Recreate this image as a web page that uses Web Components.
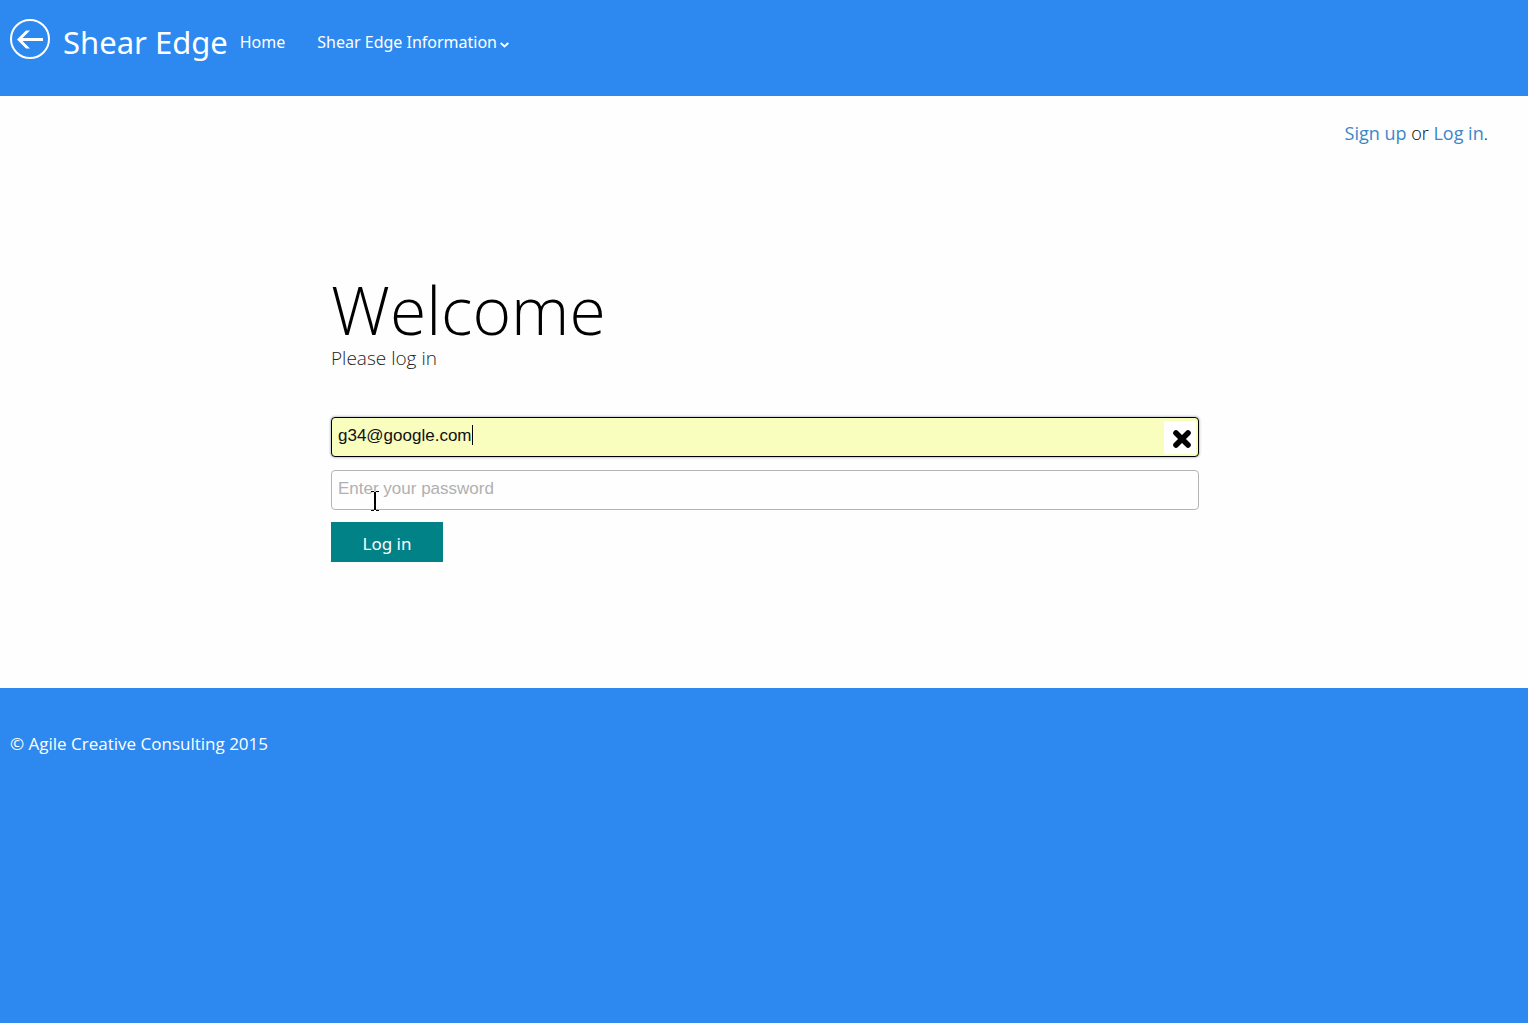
<!DOCTYPE html>
<html lang="en">
<head>
<meta charset="utf-8">
<title>Shear Edge - Log in</title>
<style>
html, body { margin: 0; min-height: 100%; }
body { font-family: "Open Sans", "Noto Sans", sans-serif; font-size: 17px; line-height: 24px; color: #000; background: #fefefe; }
</style>
</head>
<body>
<shear-app></shear-app>
<script>
const define = (name, html, setup) => customElements.define(name, class extends HTMLElement {
  connectedCallback() {
    if (this.shadowRoot) return;
    this.attachShadow({ mode: 'open' }).innerHTML = html;
    if (setup) setup(this.shadowRoot, this);
  }
});

define('shear-header', `
<style>
:host { display: block; background: #2d89f0; color: #fff; }
header { display: flex; height: 96px; box-sizing: border-box; padding: 19px 10px 0; align-items: flex-start; }
a { color: inherit; text-decoration: none; }
.back { display: block; width: 40px; height: 40px; margin-right: 13px; }
svg { display: block; }
.brand { font: 31px/46px "Noto Sans", sans-serif; margin-right: 12px; }
nav { display: flex; gap: 32px; font: 16px/46px "Noto Sans", sans-serif; }
.menu { display: flex; align-items: center; gap: 3px; }
.menu svg { margin-top: 6px; }
</style>
<header>
  <a class="back" href="#" aria-label="Back"><svg width="40" height="40" viewBox="0 0 40 40" fill="none" stroke="#fff"><circle cx="20" cy="20" r="19" stroke-width="2"/><path d="M33 20.5H9" stroke-width="3"/><path d="M7 20.5L16 11.5H20L11 20.5L20 29.5H16Z" fill="#fff" stroke="none"/></svg></a>
  <a class="brand" href="#">Shear Edge</a>
  <nav><a href="#">Home</a><a class="menu" href="#">Shear Edge Information<svg width="9" height="6" viewBox="0 0 9 6" fill="none" stroke="#fff" stroke-width="2"><path d="M.7 1L4.5 4.4L8.3 1"/></svg></a></nav>
</header>`);

define('account-links', `
<style>
:host { display: block; text-align: right; padding: 25px 40px 0; font-size: 18px; line-height: 24px; font-weight: 300; }
a { color: #3a87c8; text-decoration: none; font-weight: 400; }
</style>
<a href="#">Sign up</a> or <a href="#">Log in</a>.`);

define('text-field', `
<style>
:host { display: block; }
.box { display: flex; align-items: center; height: 40px; box-sizing: border-box; border: 1px solid #b4b4b4; border-radius: 4px; padding: 0 2px 0 6px; background: #fefefe; }
.box.active { border-color: #000; background: #f9fdbd; box-shadow: 0 0 2px 1px #c4c8d0; }
input { flex: 1; min-width: 0; border: 0; outline: 0; padding: 0 0 2px; margin: 0; background: none; font: 17px/24px "Liberation Sans", sans-serif; color: #111; }
input::placeholder { color: #b0b0b0; opacity: 1; }
.active input { flex: none; field-sizing: content; }
.caret { width: 1px; height: 20px; background: #000; margin-bottom: 4px; }
label { position: absolute; width: 1px; height: 1px; overflow: hidden; clip-path: inset(50%); }
</style>
<label for="f"></label><div class="box"><input id="f"></div>`,
(root, host) => {
  const input = root.querySelector('input');
  input.type = host.getAttribute('type');
  root.querySelector('label').setAttribute('aria-label', host.getAttribute('label'));
  input.setAttribute('aria-label', host.getAttribute('label'));
  if (host.hasAttribute('placeholder')) input.placeholder = host.getAttribute('placeholder');
  if (host.hasAttribute('value')) {
    input.value = host.getAttribute('value');
    root.querySelector('.box').classList.add('active');
    input.insertAdjacentHTML('afterend', `<span class="caret"></span><clear-button></clear-button>`);
  }
});

define('clear-button', `
<style>
:host { display: block; margin-left: auto; }
button { display: block; width: 32px; height: 33px; border: 0; padding: 3px 0 0 3px; background: #fff; }
svg { display: block; margin: auto; }
</style>
<button type="button" aria-label="Clear"><svg width="20" height="20" viewBox="0 0 20 20" stroke="#000" stroke-width="5.6" stroke-linecap="round"><path d="M4 4L16 16M16 4L4 16"/></svg></button>`);

define('login-form', `
<style>
:host { display: block; max-width: 868px; margin: 129px auto 0; padding-left: 2px; }
h1 { margin: 0; font-size: 66px; line-height: 70px; font-weight: 300; }
p { margin: 0 0 45px; font-size: 19px; line-height: 28px; font-weight: 300; color: #222; }
form { position: relative; display: grid; gap: 12px; }
.fields { display: grid; gap: 13px; }
.submit { justify-self: start; width: 112px; height: 40px; margin: 0; border: 0; padding: 4px 0 0; background: #008287; color: #fff; font: 17px/24px "Noto Sans", sans-serif; }
.pointer { position: absolute; left: 40px; top: 74px; }
</style>
<h1>Welcome</h1>
<p>Please log in</p>
<form>
  <div class="fields">
    <text-field type="text" label="Email" value="g34@google.com"></text-field>
    <text-field type="password" label="Password" placeholder="Enter your password"></text-field>
  </div>
  <button class="submit" type="button">Log in</button>
  <svg class="pointer" width="8" height="20" viewBox="0 0 8 20" fill="#000"><path d="M0 0H3V1H0ZM5 0H8V1H5ZM3 1H5V19H3ZM0 19H3V20H0ZM5 19H8V20H5Z"/></svg>
</form>`);

define('shear-footer', `
<style>
:host { display: block; flex: 1; background: #2d89f0; color: #fff; }
footer { padding: 44px 10px; font-size: 17px; line-height: 24px; }
</style>
<footer>© Agile Creative Consulting 2015</footer>`);

define('shear-app', `
<style>
:host { display: flex; flex-direction: column; min-height: 100vh; }
main { min-height: 592px; box-sizing: border-box; padding-bottom: 40px; }
</style>
<shear-header></shear-header>
<main><account-links></account-links><login-form></login-form></main>
<shear-footer></shear-footer>`);
</script>
</body>
</html>
